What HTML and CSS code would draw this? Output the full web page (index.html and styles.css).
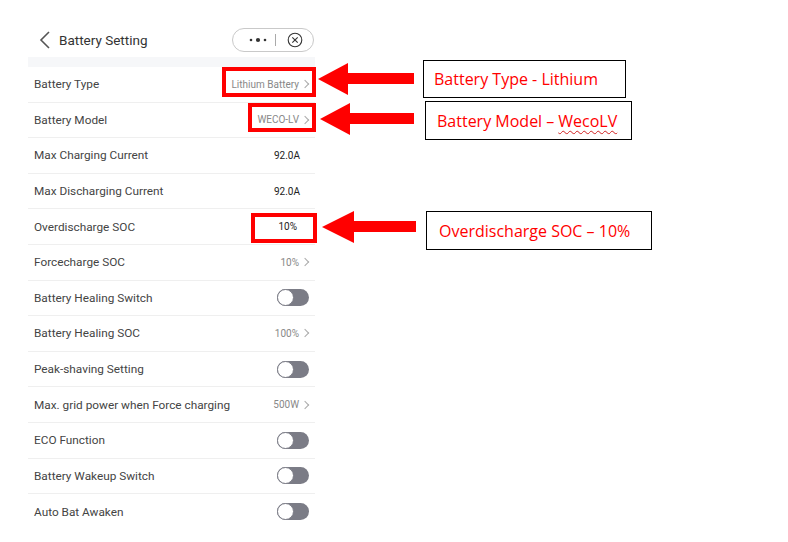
FILE: index.html
```html
<!DOCTYPE html>
<html>
<head>
<meta charset="utf-8">
<link rel="stylesheet" href="styles.css">
</head>
<body>
<div class="stage">
  <div class="panel">
    <div class="header">
      <svg class="back" width="12" height="18" viewBox="0 0 12 18"><path d="M10 1 L2 9 L10 17" fill="none" stroke="#555" stroke-width="1.6"/></svg>
      <span class="title">Battery Setting</span>
      <div class="pill">
        <svg width="20" height="8" viewBox="0 0 20 8"><circle cx="3" cy="4" r="1.3" fill="#333"/><circle cx="10" cy="4" r="2.1" fill="#333"/><circle cx="17" cy="4" r="1.3" fill="#333"/></svg>
        <span class="sep"></span>
        <svg class="close" width="16" height="16" viewBox="0 0 16 16"><circle cx="8" cy="8" r="6.8" fill="none" stroke="#333" stroke-width="1.1"/><path d="M5.3 5.3 L10.7 10.7 M10.7 5.3 L5.3 10.7" stroke="#333" stroke-width="1.1"/></svg>
      </div>
    </div>
    <div class="strip"></div>
    <div class="row"><span class="label">Battery Type</span><span class="val grey">Lithium Battery<i class="chev"></i></span></div>
    <div class="row"><span class="label">Battery Model</span><span class="val grey">WECO-LV<i class="chev"></i></span></div>
    <div class="row"><span class="label">Max Charging Current</span><span class="val dark pr10">92.0A</span></div>
    <div class="row"><span class="label">Max Discharging Current</span><span class="val dark pr10">92.0A</span></div>
    <div class="row"><span class="label">Overdischarge SOC</span><span class="val dark pr14">10%</span></div>
    <div class="row"><span class="label">Forcecharge SOC</span><span class="val grey">10%<i class="chev"></i></span></div>
    <div class="row"><span class="label">Battery Healing Switch</span><span class="toggle"></span></div>
    <div class="row"><span class="label">Battery Healing SOC</span><span class="val grey">100%<i class="chev"></i></span></div>
    <div class="row"><span class="label">Peak-shaving Setting</span><span class="toggle"></span></div>
    <div class="row"><span class="label">Max. grid power when Force charging</span><span class="val grey">500W<i class="chev"></i></span></div>
    <div class="row"><span class="label">ECO Function</span><span class="toggle"></span></div>
    <div class="row"><span class="label">Battery Wakeup Switch</span><span class="toggle"></span></div>
    <div class="row last"><span class="label">Auto Bat Awaken</span><span class="toggle"></span></div>
  </div>

  <div class="hl hl1"></div>
  <div class="hl hl2"></div>
  <div class="hl hl3"></div>

  <svg class="arrow a1" width="96" height="32" viewBox="0 0 96 32"><polygon points="0,16 30,0 30,10 96,10 96,21 30,21 30,32" fill="#ff0000"/></svg>
  <svg class="arrow a2" width="94" height="32" viewBox="0 0 94 32"><polygon points="0,16 30,0 30,10 94,10 94,21 30,21 30,32" fill="#ff0000"/></svg>
  <svg class="arrow a3" width="94" height="32" viewBox="0 0 94 32"><polygon points="0,16 32,0 32,10 94,10 94,21 32,21 32,32" fill="#ff0000"/></svg>

  <div class="note n1">Battery Type - Lithium</div>
  <div class="note n2">Battery Model – <span class="squiggle">WecoLV</span></div>
  <div class="note n3">Overdischarge SOC – 10%</div>
</div>
</body>
</html>
```
FILE: styles.css
```css
html, body {
  margin: 0;
  padding: 0;
  background: #ffffff;
}
body {
  font-family: Roboto, "Noto Sans", Arial, sans-serif;
}
.stage {
  position: relative;
  width: 788px;
  height: 542px;
  overflow: hidden;
}
.panel {
  margin-left: 28px;
  width: 287px;
  background: #fff;
}
.header {
  height: 57px;
  box-sizing: border-box;
  padding-top: 23px;
  display: flex;
  align-items: center;
}
.back {
  margin-left: 11px;
}
.title {
  margin-left: 8px;
  font-size: 13.5px;
  color: #333;
}
.pill {
  margin-left: auto;
  margin-right: 1px;
  width: 82px;
  height: 24px;
  border: 1px solid #c9c9c9;
  border-radius: 13px;
  display: flex;
  align-items: center;
  padding: 0 0 0 15px;
  box-sizing: border-box;
}
.sep {
  width: 1px;
  height: 12px;
  background: #aaa;
  margin-left: 7px;
}
.close {
  margin-left: 11px;
}
.strip {
  height: 10px;
  background: #f6f7f9;
}
.row {
  height: 35.6px;
  box-sizing: border-box;
  border-bottom: 1px solid #efefef;
  display: flex;
  align-items: center;
  justify-content: space-between;
  padding: 0 6px 0 6px;
}
.row.last {
  border-bottom: none;
}
.label {
  font-size: 11.8px;
  color: #444;
}
.val {
  font-size: 10px;
  display: flex;
  align-items: center;
}
.val.grey {
  color: #888;
}
.val.dark {
  color: #222;
}
.pr10 { padding-right: 9px; }
.pr14 { padding-right: 12px; }
.chev {
  display: inline-block;
  width: 5px;
  height: 5px;
  border-top: 1px solid #aaa;
  border-right: 1px solid #aaa;
  transform: rotate(45deg);
  margin-left: 3px;
  margin-right: 1px;
}
.toggle {
  width: 32px;
  height: 17px;
  border-radius: 9px;
  background: #7b7c86;
  position: relative;
}
.toggle::before {
  content: "";
  position: absolute;
  left: 0;
  top: 0;
  width: 15px;
  height: 15px;
  border-radius: 50%;
  background: #fff;
  border: 1px solid #7b7c86;
}
.hl {
  position: absolute;
  border: 4px solid #ff0000;
  box-sizing: border-box;
}
.hl1 { left: 222px; top: 67px; width: 94px; height: 30px; }
.hl2 { left: 248px; top: 103px; width: 68px; height: 29px; }
.hl3 { left: 251px; top: 213px; width: 66px; height: 30px; }
.arrow {
  position: absolute;
}
.a1 { left: 318px; top: 63px; }
.a2 { left: 320px; top: 103px; }
.a3 { left: 322px; top: 211px; }
.note {
  position: absolute;
  border: 1px solid #000;
  box-sizing: border-box;
  color: #ff0000;
  font-family: "Open Sans", "Noto Sans", sans-serif;
  font-size: 16px;
  display: flex;
  align-items: center;
  padding-left: 10px;
  background: #fff;
}
.n1 { left: 423px; top: 60px; width: 203px; height: 38px; }
.n2 { left: 425px; top: 101px; width: 207px; height: 39px; padding-left: 11px; }
.n3 { left: 426px; top: 211px; width: 226px; height: 39px; padding-left: 12px; }
.squiggle {
  text-decoration: underline wavy #d02020;
  text-decoration-thickness: 1px;
  text-underline-offset: 3px;
  margin-left: 4px;
}
```
